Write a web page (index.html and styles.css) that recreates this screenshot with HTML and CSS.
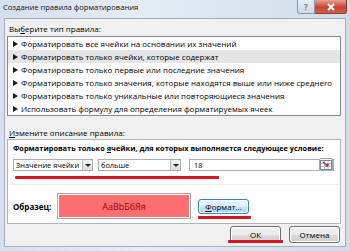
FILE: index.html
```html
<!DOCTYPE html>
<html lang="ru">
<head>
    <meta charset="UTF-8">
    <title>Создание правила форматирования</title>
    <link rel="stylesheet" href="styles.css">
</head>
<body>
    <div class="window">
        <div class="title-bar">
            <span class="title">Создание правила форматирования</span>
            <div class="title-buttons">
                <div class="btn-help">?</div>
                <div class="btn-close">
                    <svg width="10" height="8" viewBox="0 0 10 8"><path d="M2 1 L8 7 M8 1 L2 7" stroke="#fff" stroke-width="2"/></svg>
                </div>
            </div>
        </div>
        <div class="client">
            <div class="label">Вы<u>б</u>ерите тип правила:</div>
            <div class="rule-list">
                <div class="rule-item">Форматировать все ячейки на основании их значений</div>
                <div class="rule-item selected">Форматировать только ячейки, которые содержат</div>
                <div class="rule-item">Форматировать только первые или последние значения</div>
                <div class="rule-item">Форматировать только значения, которые находятся выше или ниже среднего</div>
                <div class="rule-item">Форматировать только уникальные или повторяющиеся значения</div>
                <div class="rule-item">Использовать формулу для определения форматируемых ячеек</div>
            </div>
            <div class="label label-edit"><u>И</u>змените описание правила:</div>
            <div class="panel">
                <div class="cond-title">Форматировать только <u>я</u>чейки, для которых выполняется следующее условие:</div>
                <div class="cond-row">
                    <div class="combo combo-what">Значение ячейки<span class="combo-arrow"></span></div>
                    <div class="combo combo-op">больше<span class="combo-arrow"></span></div>
                    <div class="value-input">18
                        <span class="ref-btn">
                            <svg width="12" height="10" viewBox="0 0 12 10">
                                <rect x="0.5" y="0.5" width="11" height="9" fill="#fff" stroke="#7a8a9c"/>
                                <path d="M1 3.5 H11 M1 6.5 H11 M4.5 1 V9 M8 1 V9" stroke="#b9c4d0" stroke-width="1"/>
                                <path d="M3 2 L8 6 M8 6 L8 3.5 M8 6 L5.5 6" stroke="#d42020" stroke-width="1.4" fill="none"/>
                            </svg>
                        </span>
                    </div>
                </div>
                <div class="mark mark-cond"></div>
                <div class="separator"></div>
                <div class="sample-row">
                    <span class="sample-label">Образец:</span>
                    <div class="sample-box">AaBbБбЯя</div>
                    <div class="format-col">
                        <div class="button button-focus"><u>Ф</u>ормат...</div>
                        <div class="mark mark-format"></div>
                    </div>
                </div>
            </div>
            <div class="dialog-buttons">
                <div class="button-wrap">
                    <div class="button">ОК</div>
                    <div class="mark mark-ok"></div>
                </div>
                <div class="button">Отмена</div>
            </div>
        </div>
    </div>
</body>
</html>
```

FILE: styles.css
```css
body {
    margin: 0;
    padding: 0;
    font-family: "Open Sans", "Liberation Sans", sans-serif;
    font-size: 8px;
    color: #000;
    overflow: hidden;
}
.window {
    width: 350px;
    height: 251px;
    box-sizing: border-box;
    padding: 0 4px 4px 4px;
    background: linear-gradient(90deg, #d4e0ee 0%, #e4ecf5 40%, #cfdcea 100%);
    display: flex;
    flex-direction: column;
}
.title-bar {
    height: 18px;
    display: flex;
    justify-content: space-between;
    align-items: flex-start;
}
.title {
    font-size: 7.6px;
    line-height: 15px;
    margin-left: -1px;
    color: #111;
}
.title-buttons {
    display: flex;
    margin-right: -1px;
}
.btn-help {
    width: 18px;
    height: 14px;
    box-sizing: border-box;
    border: 1px solid #8a9aae;
    border-top: none;
    border-radius: 0 0 0 3px;
    background: linear-gradient(#e9eef5, #cdd8e6);
    color: #7d8a9b;
    font-size: 9px;
    font-weight: bold;
    text-align: center;
    line-height: 13px;
}
.btn-close {
    width: 32px;
    height: 14px;
    box-sizing: border-box;
    border: 1px solid #8a3a34;
    border-top: none;
    border-left: none;
    border-radius: 0 0 3px 0;
    background: linear-gradient(#e8a093, #c8452f 55%, #d0604a);
    display: flex;
    align-items: center;
    justify-content: center;
}
.client {
    flex: 1;
    background: #f0f0f0;
    border: 1px solid #a3afbc;
    padding: 4px 4px 0 2px;
    display: flex;
    flex-direction: column;
    position: relative;
}
.label {
    line-height: 11px;
    padding-left: 2px;
}
.rule-list {
    margin-top: 2px;
    background: #fff;
    border: 1px solid #828790;
}
.rule-item {
    height: 13px;
    line-height: 13px;
    padding-left: 5px;
    white-space: nowrap;
    display: flex;
    align-items: center;
}
.rule-item::before {
    content: "";
    width: 0;
    height: 0;
    border-left: 5px solid #1a1a1a;
    border-top: 3px solid transparent;
    border-bottom: 3px solid transparent;
    margin-right: 3px;
}
.rule-item.selected {
    background: #e5e5e5;
}
.label-edit {
    margin-top: 11px;
}
.panel {
    margin-top: 1px;
    background: #fff;
    border: 1px solid #b5b5b5;
    padding: 3px 6px 4px 5px;
}
.cond-title {
    font-weight: bold;
    font-size: 7.4px;
    line-height: 11px;
    white-space: nowrap;
}
.cond-row {
    margin-top: 5px;
    display: flex;
    height: 12px;
}
.combo {
    position: relative;
    box-sizing: border-box;
    height: 12px;
    border: 1px solid #abadb3;
    font-size: 7.4px;
    line-height: 10px;
    padding-left: 2px;
    background: #fff;
    white-space: nowrap;
    overflow: hidden;
}
.combo-what {
    width: 80px;
}
.combo-op {
    width: 83px;
    margin-left: 5px;
}
.combo-arrow {
    position: absolute;
    right: 0;
    top: 0;
    width: 10px;
    height: 10px;
    box-sizing: border-box;
    border-left: 1px solid #b9b9b9;
    background: linear-gradient(#f3f3f3, #dcdcdc);
}
.combo-arrow::after {
    content: "";
    position: absolute;
    left: 2px;
    top: 4px;
    border-top: 3px solid #222;
    border-left: 3px solid transparent;
    border-right: 3px solid transparent;
}
.value-input {
    position: relative;
    margin-left: 8px;
    flex: 1;
    box-sizing: border-box;
    height: 12px;
    border: 1px solid #abadb3;
    font-size: 7.4px;
    line-height: 10px;
    padding-left: 4px;
}
.ref-btn {
    position: absolute;
    right: 0;
    top: -2px;
    width: 14px;
    height: 13px;
    box-sizing: border-box;
    border: 1px solid #9aa7b6;
    border-radius: 2px;
    background: linear-gradient(#f1f4f8, #d6dee8);
    display: flex;
    align-items: center;
    justify-content: center;
}
.mark {
    background: #d4161e;
    height: 3px;
    border-radius: 1px;
}
.mark-cond {
    margin-top: 5px;
    margin-left: 2px;
    width: 204px;
}
.separator {
    margin-top: 5px;
    height: 1px;
    background: #ececec;
    margin-left: -4px;
    margin-right: -5px;
}
.sample-row {
    margin-top: 8px;
    display: flex;
    align-items: center;
}
.sample-label {
    font-weight: bold;
    width: 44px;
}
.sample-box {
    width: 134px;
    height: 26px;
    box-sizing: border-box;
    border: 1px solid #a9a9a9;
    box-shadow: inset 0 0 0 1px #fff;
    background: #ff6f6f;
    color: #9c0006;
    font-size: 9px;
    display: flex;
    align-items: center;
    justify-content: center;
}
.format-col {
    margin-left: 7px;
    align-self: flex-start;
    margin-top: 6px;
    width: 53px;
}
.button {
    box-sizing: border-box;
    width: 51px;
    height: 17px;
    border: 1px solid #707070;
    border-radius: 3px;
    background: linear-gradient(#f2f2f2 0%, #ebebeb 50%, #dddddd 51%, #cfcfcf 100%);
    display: flex;
    align-items: center;
    justify-content: center;
    box-shadow: inset 0 0 0 1px #fcfcfc;
}
.button-focus {
    height: 15px;
    border-color: #3c7fb1;
    background: linear-gradient(#eaf6fd 0%, #d9f0fc 50%, #bee6fd 51%, #a7d9f5 100%);
}
.mark-format {
    margin-top: 2px;
    height: 3px;
}
.dialog-buttons {
    margin-top: 2px;
    display: flex;
    justify-content: flex-end;
    gap: 8px;
    padding-right: 1px;
}
.button-wrap {
    position: relative;
}
.mark-ok {
    position: absolute;
    left: -2px;
    right: -2px;
    top: 14px;
    height: 3px;
}
```
